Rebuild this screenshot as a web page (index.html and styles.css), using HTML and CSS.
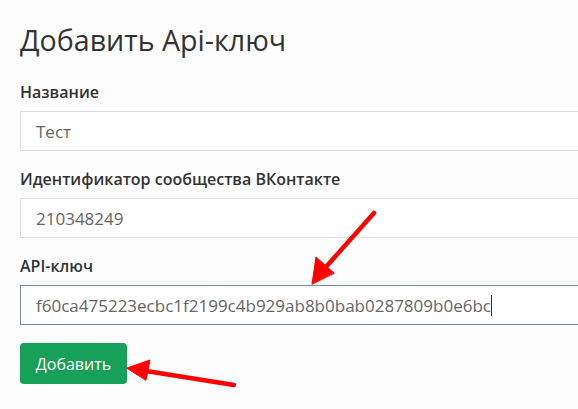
FILE: index.html
```html
<!DOCTYPE html>
<html lang="ru">
<head>
<meta charset="utf-8">
<link rel="stylesheet" href="styles.css">
</head>
<body>
<div class="page">
  <h1 class="title">Добавить Api-ключ</h1>
  <form class="form">
    <div class="field">
      <label class="label">Название</label>
      <div class="input">Тест</div>
    </div>
    <div class="field">
      <label class="label">Идентификатор сообщества ВКонтакте</label>
      <div class="input">210348249</div>
    </div>
    <div class="field">
      <label class="label">API-ключ</label>
      <div class="input input-focus">f60ca475223ecbc1f2199c4b929ab8b0bab0287809b0e6bc<span class="caret"></span></div>
    </div>
    <button type="button" class="btn">Добавить</button>
  </form>
  <svg class="arrows" width="578" height="409" viewBox="0 0 578 409">
    <g fill="#ff0000" stroke="#ff0000" stroke-linecap="round">
      <line x1="374" y1="213" x2="325" y2="268" stroke-width="4.5"/>
      <polygon points="312,284 316,257 334,273" stroke-width="1"/>
      <line x1="234" y1="385" x2="146" y2="371" stroke-width="4.5"/>
      <polygon points="127,368 150,360 146,380" stroke-width="1"/>
    </g>
  </svg>
</div>
</body>
</html>
```
FILE: styles.css
```css
html, body {
  margin: 0;
  padding: 0;
  background: #fdfdfd;
  overflow: hidden;
}
.page {
  position: relative;
  width: 578px;
  height: 409px;
  padding: 23px 0 0 20px;
  box-sizing: border-box;
  font-family: "Open Sans", "Noto Sans", sans-serif;
  color: #333;
}
.title {
  margin: 0;
  font-size: 28.6px;
  font-weight: 400;
  line-height: 34px;
  color: #333;
}
.form {
  margin-top: 27px;
  display: flex;
  flex-direction: column;
  gap: 20px;
}
.field {
  display: flex;
  flex-direction: column;
  gap: 11px;
}
.label {
  font-size: 16px;
  font-weight: 600;
  line-height: 16px;
  color: #333;
}
.input {
  width: 580px;
  height: 40px;
  box-sizing: border-box;
  border: 1px solid #dedede;
  padding: 0 15px;
  display: flex;
  align-items: center;
  font-size: 17px;
  color: #666;
  background: #fff;
}
.input-focus {
  border-color: #6f8f96;
}
.caret {
  display: inline-block;
  width: 1px;
  height: 21px;
  background: #333;
  margin-left: 0;
}
.btn {
  align-self: flex-start;
  margin-top: -2px;
  width: 107px;
  height: 41px;
  border: none;
  border-radius: 4px;
  background: #16a05a;
  color: #fff;
  font-family: "Open Sans", "Noto Sans", sans-serif;
  font-size: 16px;
  padding: 0;
}
.arrows {
  position: absolute;
  left: 0;
  top: 0;
  pointer-events: none;
}
```
